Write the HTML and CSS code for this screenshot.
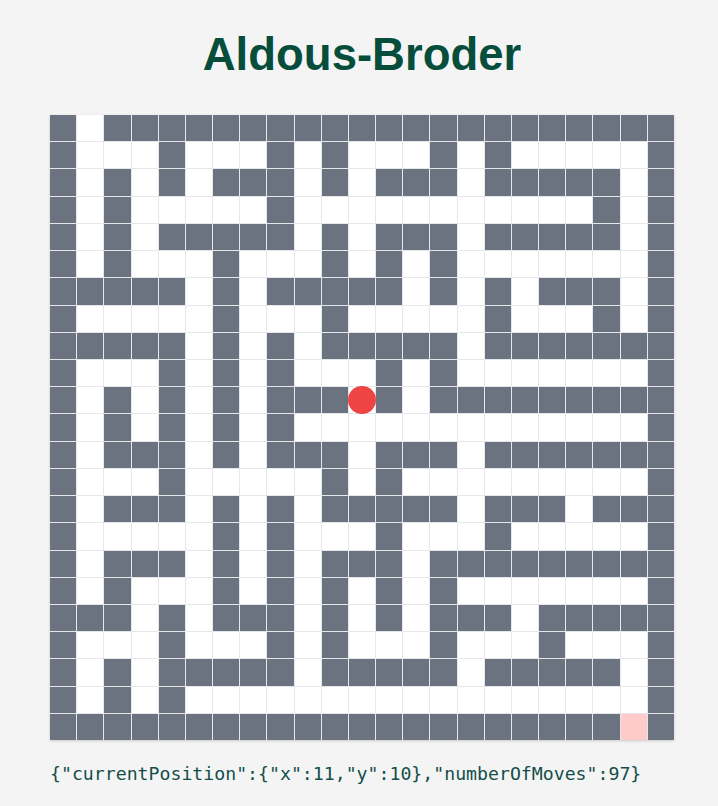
FILE: index.html
```html
<!DOCTYPE html>
<html lang="en">
<head>
<meta charset="utf-8">
<title>Aldous-Broder</title>
<link rel="stylesheet" href="styles.css">
</head>
<body>
<main class="page">
  <h1 class="title">Aldous-Broder</h1>
  <div class="maze">
    <div class="row"><span class="w"></span><span></span><span class="w"></span><span class="w"></span><span class="w"></span><span class="w"></span><span class="w"></span><span class="w"></span><span class="w"></span><span class="w"></span><span class="w"></span><span class="w"></span><span class="w"></span><span class="w"></span><span class="w"></span><span class="w"></span><span class="w"></span><span class="w"></span><span class="w"></span><span class="w"></span><span class="w"></span><span class="w"></span><span class="w"></span></div>
    <div class="row"><span class="w"></span><span></span><span></span><span></span><span class="w"></span><span></span><span></span><span></span><span class="w"></span><span></span><span class="w"></span><span></span><span></span><span></span><span class="w"></span><span></span><span class="w"></span><span></span><span></span><span></span><span></span><span></span><span class="w"></span></div>
    <div class="row"><span class="w"></span><span></span><span class="w"></span><span></span><span class="w"></span><span></span><span class="w"></span><span class="w"></span><span class="w"></span><span></span><span class="w"></span><span></span><span class="w"></span><span class="w"></span><span class="w"></span><span></span><span class="w"></span><span class="w"></span><span class="w"></span><span class="w"></span><span class="w"></span><span></span><span class="w"></span></div>
    <div class="row"><span class="w"></span><span></span><span class="w"></span><span></span><span></span><span></span><span></span><span></span><span class="w"></span><span></span><span></span><span></span><span></span><span></span><span></span><span></span><span></span><span></span><span></span><span></span><span class="w"></span><span></span><span class="w"></span></div>
    <div class="row"><span class="w"></span><span></span><span class="w"></span><span></span><span class="w"></span><span class="w"></span><span class="w"></span><span class="w"></span><span class="w"></span><span></span><span class="w"></span><span></span><span class="w"></span><span class="w"></span><span class="w"></span><span></span><span class="w"></span><span class="w"></span><span class="w"></span><span class="w"></span><span class="w"></span><span></span><span class="w"></span></div>
    <div class="row"><span class="w"></span><span></span><span class="w"></span><span></span><span></span><span></span><span class="w"></span><span></span><span></span><span></span><span class="w"></span><span></span><span class="w"></span><span></span><span class="w"></span><span></span><span></span><span></span><span></span><span></span><span></span><span></span><span class="w"></span></div>
    <div class="row"><span class="w"></span><span class="w"></span><span class="w"></span><span class="w"></span><span class="w"></span><span></span><span class="w"></span><span></span><span class="w"></span><span class="w"></span><span class="w"></span><span class="w"></span><span class="w"></span><span></span><span class="w"></span><span></span><span class="w"></span><span></span><span class="w"></span><span class="w"></span><span class="w"></span><span></span><span class="w"></span></div>
    <div class="row"><span class="w"></span><span></span><span></span><span></span><span></span><span></span><span class="w"></span><span></span><span></span><span></span><span class="w"></span><span></span><span></span><span></span><span></span><span></span><span class="w"></span><span></span><span></span><span></span><span class="w"></span><span></span><span class="w"></span></div>
    <div class="row"><span class="w"></span><span class="w"></span><span class="w"></span><span class="w"></span><span class="w"></span><span></span><span class="w"></span><span></span><span class="w"></span><span></span><span class="w"></span><span class="w"></span><span class="w"></span><span class="w"></span><span class="w"></span><span></span><span class="w"></span><span class="w"></span><span class="w"></span><span class="w"></span><span class="w"></span><span class="w"></span><span class="w"></span></div>
    <div class="row"><span class="w"></span><span></span><span></span><span></span><span class="w"></span><span></span><span class="w"></span><span></span><span class="w"></span><span></span><span></span><span></span><span class="w"></span><span></span><span class="w"></span><span></span><span></span><span></span><span></span><span></span><span></span><span></span><span class="w"></span></div>
    <div class="row"><span class="w"></span><span></span><span class="w"></span><span></span><span class="w"></span><span></span><span class="w"></span><span></span><span class="w"></span><span class="w"></span><span class="w"></span><span class="cur"><em class="dot"></em></span><span class="w"></span><span></span><span class="w"></span><span class="w"></span><span class="w"></span><span class="w"></span><span class="w"></span><span class="w"></span><span class="w"></span><span class="w"></span><span class="w"></span></div>
    <div class="row"><span class="w"></span><span></span><span class="w"></span><span></span><span class="w"></span><span></span><span class="w"></span><span></span><span class="w"></span><span></span><span></span><span></span><span></span><span></span><span></span><span></span><span></span><span></span><span></span><span></span><span></span><span></span><span class="w"></span></div>
    <div class="row"><span class="w"></span><span></span><span class="w"></span><span class="w"></span><span class="w"></span><span></span><span class="w"></span><span></span><span class="w"></span><span class="w"></span><span class="w"></span><span></span><span class="w"></span><span class="w"></span><span class="w"></span><span></span><span class="w"></span><span class="w"></span><span class="w"></span><span class="w"></span><span class="w"></span><span class="w"></span><span class="w"></span></div>
    <div class="row"><span class="w"></span><span></span><span></span><span></span><span class="w"></span><span></span><span></span><span></span><span></span><span></span><span class="w"></span><span></span><span class="w"></span><span></span><span></span><span></span><span></span><span></span><span></span><span></span><span></span><span></span><span class="w"></span></div>
    <div class="row"><span class="w"></span><span></span><span class="w"></span><span class="w"></span><span class="w"></span><span></span><span class="w"></span><span></span><span class="w"></span><span></span><span class="w"></span><span class="w"></span><span class="w"></span><span class="w"></span><span class="w"></span><span></span><span class="w"></span><span class="w"></span><span class="w"></span><span></span><span class="w"></span><span class="w"></span><span class="w"></span></div>
    <div class="row"><span class="w"></span><span></span><span></span><span></span><span></span><span></span><span class="w"></span><span></span><span class="w"></span><span></span><span></span><span></span><span class="w"></span><span></span><span></span><span></span><span class="w"></span><span></span><span></span><span></span><span></span><span></span><span class="w"></span></div>
    <div class="row"><span class="w"></span><span></span><span class="w"></span><span class="w"></span><span class="w"></span><span></span><span class="w"></span><span></span><span class="w"></span><span></span><span class="w"></span><span class="w"></span><span class="w"></span><span></span><span class="w"></span><span class="w"></span><span class="w"></span><span class="w"></span><span class="w"></span><span class="w"></span><span class="w"></span><span class="w"></span><span class="w"></span></div>
    <div class="row"><span class="w"></span><span></span><span class="w"></span><span></span><span></span><span></span><span class="w"></span><span></span><span class="w"></span><span></span><span class="w"></span><span></span><span class="w"></span><span></span><span class="w"></span><span></span><span></span><span></span><span></span><span></span><span></span><span></span><span class="w"></span></div>
    <div class="row"><span class="w"></span><span class="w"></span><span class="w"></span><span></span><span class="w"></span><span></span><span class="w"></span><span class="w"></span><span class="w"></span><span></span><span class="w"></span><span></span><span class="w"></span><span></span><span class="w"></span><span class="w"></span><span class="w"></span><span></span><span class="w"></span><span class="w"></span><span class="w"></span><span class="w"></span><span class="w"></span></div>
    <div class="row"><span class="w"></span><span></span><span></span><span></span><span class="w"></span><span></span><span></span><span></span><span class="w"></span><span></span><span class="w"></span><span></span><span></span><span></span><span class="w"></span><span></span><span></span><span></span><span class="w"></span><span></span><span></span><span></span><span class="w"></span></div>
    <div class="row"><span class="w"></span><span></span><span class="w"></span><span></span><span class="w"></span><span class="w"></span><span class="w"></span><span class="w"></span><span class="w"></span><span></span><span class="w"></span><span class="w"></span><span class="w"></span><span class="w"></span><span class="w"></span><span></span><span class="w"></span><span class="w"></span><span class="w"></span><span class="w"></span><span class="w"></span><span></span><span class="w"></span></div>
    <div class="row"><span class="w"></span><span></span><span class="w"></span><span></span><span class="w"></span><span></span><span></span><span></span><span></span><span></span><span></span><span></span><span></span><span></span><span></span><span></span><span></span><span></span><span></span><span></span><span></span><span></span><span class="w"></span></div>
    <div class="row"><span class="w"></span><span class="w"></span><span class="w"></span><span class="w"></span><span class="w"></span><span class="w"></span><span class="w"></span><span class="w"></span><span class="w"></span><span class="w"></span><span class="w"></span><span class="w"></span><span class="w"></span><span class="w"></span><span class="w"></span><span class="w"></span><span class="w"></span><span class="w"></span><span class="w"></span><span class="w"></span><span class="w"></span><span class="exit"></span><span class="w"></span></div>
  </div>
  <pre class="state">{"currentPosition":{"x":11,"y":10},"numberOfMoves":97}</pre>
</main>
</body>
</html>
```

FILE: styles.css
```css
html, body {
  margin: 0;
  padding: 0;
  background: #f4f4f4;
}

.page {
  padding: 29px 0 0 50px;
  width: 624px;
}

.title {
  margin: 0 0 34px;
  font-family: "Liberation Sans", Arial, sans-serif;
  font-weight: 700;
  font-size: 45.5px;
  line-height: 52px;
  text-align: center;
  color: #064e3b;
}

.maze {
  width: 624px;
  height: 625px;
  display: flex;
  flex-direction: column;
  gap: 1px;
  background: #e5e7eb;
  box-shadow: 0 1px 3px rgba(0, 0, 0, 0.12), 0 1px 2px rgba(0, 0, 0, 0.06);
}

.row {
  flex: 1;
  display: flex;
  gap: 1px;
}

.row span {
  flex: 1;
  background: #ffffff;
}

.row .w {
  background: #6b7280;
}

.row .exit {
  background: #fecaca;
}

.row .cur {
  position: relative;
}

.dot {
  position: absolute;
  left: 50%;
  top: 50%;
  width: 28px;
  height: 28px;
  margin: -14px 0 0 -14px;
  border-radius: 50%;
  background: #ef4444;
}

.state {
  margin: 22px 0 0 0;
  font-family: "DejaVu Sans Mono", "Liberation Mono", monospace;
  font-size: 18.2px;
  line-height: 24px;
  color: #134e4a;
}
```
